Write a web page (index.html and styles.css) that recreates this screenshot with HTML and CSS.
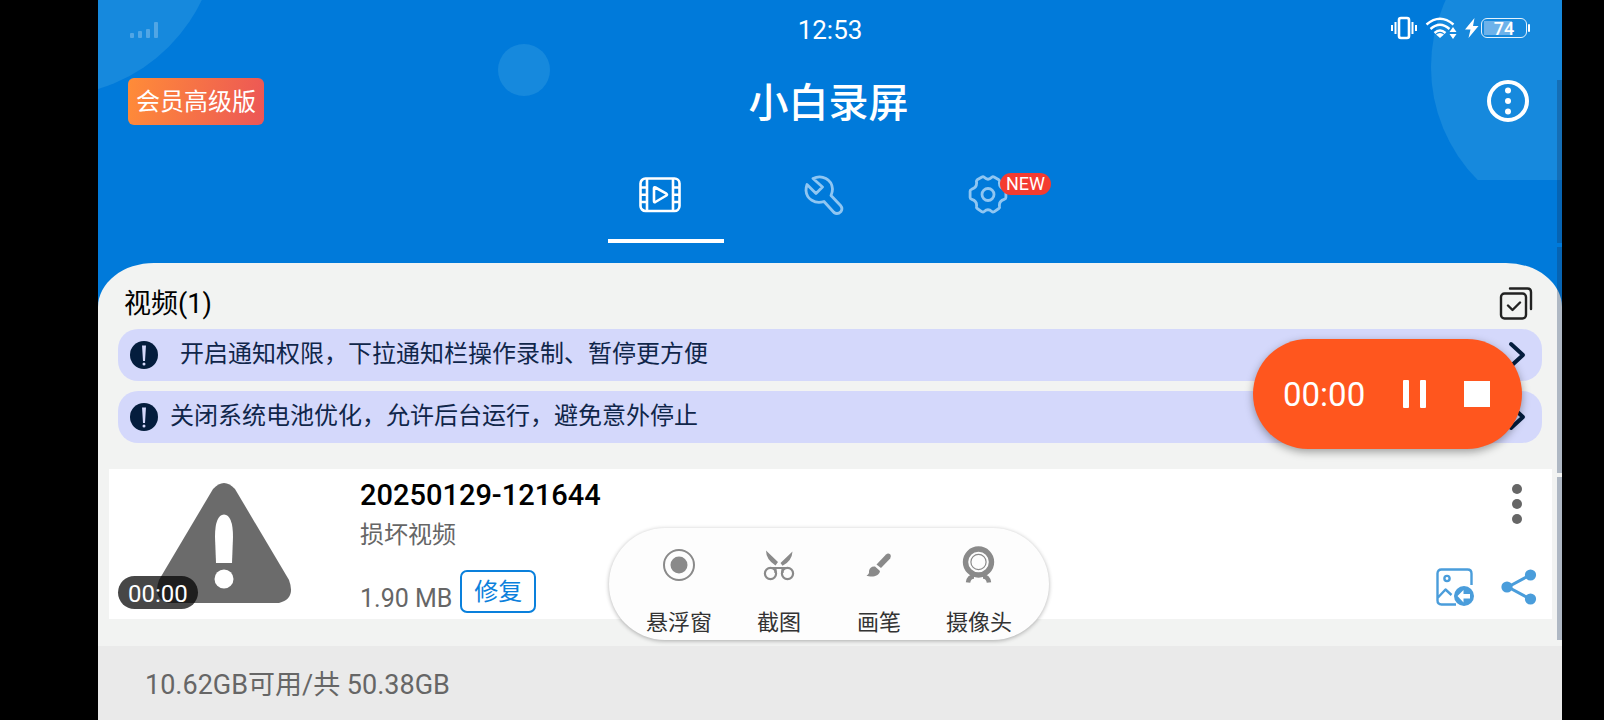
FILE: index.html
```html
<!DOCTYPE html>
<html lang="zh-CN">
<head>
<meta charset="utf-8">
<meta name="viewport" content="width=device-width, initial-scale=1">
<title>小白录屏</title>
<link rel="stylesheet" href="styles.css">
</head>
<body>
<div class="screen">
  <div class="decor" aria-hidden="true">
    <span class="bubble bubble-left"></span>
    <span class="bubble bubble-mid"></span>
    <span class="bubble bubble-right"></span>
  </div>

  <header class="header">
    <div class="status">
      <svg class="signal" width="28" height="18" viewBox="0 0 28 18" fill="#fff"><rect y="12" width="4" height="5" rx="1"/><rect x="8" y="10" width="4" height="7" rx="1"/><rect x="16" y="8" width="4" height="9" rx="1"/><rect x="24" y="1" width="4" height="16" rx="1"/></svg>
      <time class="clock">12:53</time>
      <div class="status-icons">
        <svg width="26" height="24" viewBox="0 0 26 24" fill="none" stroke="#fff" stroke-width="2"><rect x="8" y="2" width="10" height="20" rx="2" stroke-width="2.6"/><path d="M4.500 6v12M1 9v6M21.500 6v12M25 9v6"/></svg>
        <svg width="32" height="24" viewBox="0 0 32 24" fill="none" stroke="#fff" stroke-width="2.400"><path d="M1.500 8.500Q15 -3 28.500 8.500M5.500 13Q15 4.500 24.500 13M9.500 17Q15 12 20.500 17"/><path d="M11 18.500Q15 15.500 19 18.500L15 22z" fill="#fff" stroke="none"/><path d="M28 11l3.500 5h-7zM28 23l3.500-5h-7z" fill="#fff" stroke="none"/></svg>
        <svg width="14" height="20" viewBox="0 0 14 20" fill="#fff"><path d="M9.500 0L0 11.500h5.500L3.500 20 13.500 8H8z"/></svg>
        <span class="battery">74</span>
      </div>
    </div>

    <div class="titlebar">
      <button class="vip" type="button">会员高级版</button>
      <h1 class="title">小白录屏</h1>
      <button class="icon-btn menu" type="button" aria-label="菜单">
        <svg width="42" height="42" viewBox="0 0 42 42"><circle cx="21" cy="21" r="19" fill="none" stroke="#fff" stroke-width="4"/><g fill="#fff"><circle cx="21" cy="10.500" r="3"/><circle cx="21" cy="21" r="3"/><circle cx="21" cy="31.500" r="3"/></g></svg>
      </button>
    </div>

    <nav class="tabs">
      <button class="tab tab-active" type="button" aria-label="视频">
        <svg width="42" height="36" viewBox="0 0 42 36" fill="none" stroke="#fff" stroke-width="2.600" stroke-linejoin="round"><rect x="1.500" y="1.500" width="39" height="32.500" rx="5"/><path d="M8 2v32M34 2v32M2 10.500h6M2 17.800h6M2 25h6M34 10.500h6M34 17.800h6M34 25h6"/><path d="M15 11.300q0-1.500 1.400-.8l11 6.200q1.200.9 0 1.800l-11 6.500q-1.400.6-1.400-.8z"/></svg>
      </button>
      <button class="tab" type="button" aria-label="工具">
        <svg width="40" height="40" viewBox="0 0 40 40" fill="none" stroke="#8fc6f2" stroke-width="2.800" stroke-linejoin="round"><path d="M9 3.500C18-1 28 4.500 28.500 14q0 3-1.500 6.500L36.500 30.500q2.500 3 .5 6-3.500 3.500-7 1L20 26.500C11 29.500 2.500 24 2 15.500q0-3.500 1-6L12 18.500 18.500 12z"/></svg>
      </button>
      <button class="tab" type="button" aria-label="设置">
        <span class="gear">
          <svg width="40" height="40" viewBox="0 0 40 40" fill="none" stroke="#8fc6f2" stroke-width="2.800" stroke-linejoin="round"><path d="M14 2q1.200-.6 2.200.3Q20 6 23.800 2.300q1-.9 2.200-.3l4.800 2.800q1 .8.700 2-.8 5.600 4.700 7.400 1.700.6 1.700 1.800v6.500q0 1.300-1.700 1.800-5.500 1.700-4.700 7 .4 1.400-.7 2.200L26 36.800q-1.200.6-2.200-.3-3.800-3.400-7.600 0-1 .9-2.200.3l-4.800-3.300q-1-.8-.7-2.200.8-5.300-4.700-7-1.700-.5-1.700-1.800V16q0-1.200 1.700-1.800 5.500-1.800 4.700-7.400-.3-1.200.7-2z"/><circle cx="20" cy="19.500" r="6"/></svg>
          <span class="new">NEW</span>
        </span>
      </button>
    </nav>
  </header>

  <main class="sheet">
    <div class="section-head">
      <h2 class="section-title">视频(1)</h2>
      <button class="icon-btn" type="button" aria-label="多选">
        <svg width="34" height="34" viewBox="0 0 34 34" fill="none" stroke="#222" stroke-width="2.400" stroke-linecap="round" stroke-linejoin="round"><rect x="2" y="7.500" width="25" height="25" rx="3.500"/><path d="M11 2.500h17.500q3.500 0 3.500 3.500v17M9 19.500l4.500 4.500 7.500-7.500"/></svg>
      </button>
    </div>

    <div class="notices">
      <a class="notice notice-indent" href="#">
        <svg width="28" height="28" viewBox="0 0 28 28"><circle cx="14" cy="14" r="14" fill="#041d3d"/><path d="M12 4.500h4L15 20h-2z" fill="#d4d8fb"/><circle cx="14" cy="23" r="1.500" fill="#d4d8fb"/></svg>
        <span class="notice-text">开启通知权限，下拉通知栏操作录制、暂停更方便</span>
        <svg class="chevron" width="18" height="28" viewBox="0 0 18 28" fill="none" stroke="#041d3d" stroke-width="4" stroke-linecap="round" stroke-linejoin="round"><path d="M3 3l12 11L3 25"/></svg>
      </a>
      <a class="notice" href="#">
        <svg width="28" height="28" viewBox="0 0 28 28"><circle cx="14" cy="14" r="14" fill="#041d3d"/><path d="M12 4.500h4L15 20h-2z" fill="#d4d8fb"/><circle cx="14" cy="23" r="1.500" fill="#d4d8fb"/></svg>
        <span class="notice-text">关闭系统电池优化，允许后台运行，避免意外停止</span>
        <svg class="chevron" width="18" height="28" viewBox="0 0 18 28" fill="none" stroke="#041d3d" stroke-width="4" stroke-linecap="round" stroke-linejoin="round"><path d="M3 3l12 11L3 25"/></svg>
      </a>
    </div>

    <article class="video">
      <div class="thumb">
        <svg width="136" height="120" viewBox="0 0 136 120"><path d="M57 6q11-12 22 0L133 97q7 19-10 23H13Q-4 116 3 97z" fill="#6b6b6b"/><path d="M60 80L59 54q0-22 9-22.500 9 .5 9 22.500l-1 26z" fill="#fff"/><circle cx="68" cy="96" r="9.500" fill="#fff"/></svg>
        <span class="duration">00:00</span>
      </div>
      <div class="info">
        <h3 class="name">20250129-121644</h3>
        <p class="sub">损坏视频</p>
        <div class="size-row">
          <span class="size">1.90 MB</span>
          <button class="fix" type="button">修复</button>
        </div>
      </div>
      <div class="actions">
        <button class="icon-btn more" type="button" aria-label="更多">
          <svg width="10" height="40" viewBox="0 0 10 40" fill="#666"><circle cx="5" cy="5" r="5"/><circle cx="5" cy="20" r="5"/><circle cx="5" cy="35" r="5"/></svg>
        </button>
        <div class="action-row">
          <button class="icon-btn" type="button" aria-label="转换图片">
            <svg width="38" height="38" viewBox="0 0 38 38" fill="none" stroke="#4a9ddb" stroke-width="2.400"><path d="M20 36.500H5.500q-4 0-4-4v-27q0-4 4-4h26q4 0 4 4V17M2 29.500l7.500-8 6 5.500" stroke-linejoin="round"/><circle cx="11" cy="10.500" r="2.600"/><circle cx="28" cy="28" r="10" fill="#4a9ddb" stroke="none"/><path d="M21.500 28l6-6v4h6.500v4.500h-6.500v4z" fill="#fff" stroke="none"/></svg>
          </button>
          <button class="icon-btn" type="button" aria-label="分享">
            <svg width="36" height="38" viewBox="0 0 36 38" fill="#4a9ddb"><path d="M29 7L7 19l22 12" fill="none" stroke="#4a9ddb" stroke-width="3"/><circle cx="6" cy="19" r="5.600"/><circle cx="29.500" cy="7" r="5.600"/><circle cx="29.500" cy="31" r="5.600"/></svg>
          </button>
        </div>
      </div>
    </article>
  </main>

  <footer class="storage">10.62GB可用/共 50.38GB</footer>

  <div class="tools">
    <button class="tool" type="button">
      <svg width="40" height="40" viewBox="0 0 40 40"><circle cx="20" cy="20" r="15" fill="none" stroke="#8a8a8a" stroke-width="2"/><circle cx="20" cy="20" r="8.500" fill="#8a8a8a"/></svg>
      <span>悬浮窗</span>
    </button>
    <button class="tool" type="button">
      <svg width="40" height="40" viewBox="0 0 40 40"><path d="M7 5.500L19 17l-2.500 3.500Q7 14.500 7 5.500zM33.500 6.500L21.500 18l2 2.800Q33 16 33.500 6.500z" fill="#8a8a8a"/><g fill="none" stroke="#8a8a8a" stroke-width="2.200"><circle cx="11.500" cy="28.500" r="5.600"/><circle cx="28.500" cy="28.500" r="5.600"/><path d="M13 23h14M16.500 28v-6M23.500 28v-6"/></g></svg>
      <span>截图</span>
    </button>
    <button class="tool" type="button">
      <svg width="40" height="40" viewBox="0 0 40 40" fill="#8a8a8a"><path d="M17.500 19.500L27 9.500q2-2 4.200-.3 1.600 2 0 4.300L22 23z"/><path d="M16 21.500l5 4.500c-1 6.500-10 6-13.500 4.500q3-1.500 2.500-4.500 1-5 6-4.500z"/></svg>
      <span>画笔</span>
    </button>
    <button class="tool" type="button">
      <svg width="40" height="40" viewBox="0 0 40 40"><circle cx="19.500" cy="17" r="13" fill="none" stroke="#8a8a8a" stroke-width="5.400"/><circle cx="19.500" cy="17" r="7.600" fill="none" stroke="#8a8a8a" stroke-width="1.200"/><path d="M15 31.500q-5 0-6 6M24 31.500q5 0 6 6" fill="none" stroke="#8a8a8a" stroke-width="4.500"/></svg>
      <span>摄像头</span>
    </button>
  </div>

  <div class="recorder">
    <span class="rec-time">00:00</span>
    <button class="icon-btn" type="button" aria-label="暂停">
      <svg width="24" height="28" viewBox="0 0 24 28" fill="#fff"><rect width="6" height="28" rx="1"/><rect x="17" width="6" height="28" rx="1"/></svg>
    </button>
    <button class="icon-btn" type="button" aria-label="停止">
      <svg width="26" height="28" viewBox="0 0 26 28" fill="#fff"><rect y="1" width="26" height="26"/></svg>
    </button>
  </div>

  <span class="edge edge-top" aria-hidden="true"></span>
  <span class="edge edge-mid" aria-hidden="true"></span>
  <span class="edge edge-low" aria-hidden="true"></span>
</div>
</body>
</html>
```

FILE: styles.css
```css
* { box-sizing: border-box; }

body {
  margin: 0;
  background: #000;
  font-family: Roboto, "Noto Sans CJK SC", sans-serif;
}

h1, h2, h3, p { margin: 0; font-weight: 400; }

button {
  border: 0;
  padding: 0;
  background: none;
  color: inherit;
  font-family: inherit;
  cursor: pointer;
}

svg { display: block; flex: none; }

.icon-btn { display: flex; }

.screen {
  position: relative;
  display: flex;
  flex-direction: column;
  min-height: 100vh;
  margin: 0 42px 0 98px;
  background: #007ada;
  overflow: hidden;
}

/* Header background bubbles */
.decor {
  position: absolute;
  inset: 0 0 auto 0;
  height: 180px;
  overflow: hidden;
}
.bubble {
  position: absolute;
  border-radius: 50%;
  background: #1689dd;
}
.bubble-left { left: -216px; top: -240px; width: 336px; height: 336px; }
.bubble-mid { left: 400px; top: 44px; width: 52px; height: 52px; }
.bubble-right { right: -189px; top: -93px; width: 320px; height: 320px; }

.header { position: relative; color: #fff; }

.status {
  display: grid;
  grid-template-columns: 1fr auto 1fr;
  align-items: center;
  height: 56px;
  padding: 0 32px;
}
.signal { opacity: .25; margin-top: 4px; }
.clock { font-size: 26px; line-height: 32px; padding-top: 4px; }
.status-icons {
  display: flex;
  justify-content: flex-end;
  align-items: center;
  gap: 8px;
}
.battery {
  position: relative;
  width: 46px;
  height: 20px;
  margin: 0 3px 0 -6px;
  border: 1px solid #e4f2fc;
  border-radius: 6px;
  background: linear-gradient(90deg, #6db2ea 70%, transparent 70%) 2px 2px / 40px 14px no-repeat;
  font-size: 18px;
  font-weight: 500;
  line-height: 19px;
  text-align: center;
}
.battery::after {
  content: "";
  position: absolute;
  right: -4px;
  top: 5px;
  width: 2px;
  height: 8px;
  border-radius: 1px;
  background: #fff;
}

.titlebar {
  display: grid;
  grid-template-columns: 1fr auto 1fr;
  align-items: center;
  height: 90px;
  padding: 0 33px 0 30px;
}
.vip {
  justify-self: start;
  height: 47px;
  padding: 2px 8px 0;
  border-radius: 6px;
  background: linear-gradient(100deg, #ff8c38, #ec5656);
  font-size: 24px;
  line-height: 45px;
}
.title { padding-top: 6px; font-size: 40px; font-weight: 500; line-height: 56px; }
.menu { justify-self: end; }

.tabs {
  display: flex;
  justify-content: center;
  height: 117px;
}
.tab {
  position: relative;
  display: flex;
  justify-content: center;
  align-items: center;
  width: 164px;
  height: 97px;
  padding-right: 12px;
}
.tab-active::after {
  content: "";
  position: absolute;
  left: 24px;
  right: 24px;
  bottom: 0;
  height: 4px;
  background: #fff;
}
.gear { position: relative; }
.new {
  position: absolute;
  left: 32px;
  top: -2px;
  height: 22px;
  padding: 0 6px;
  border-radius: 11px;
  background: #f43b30;
  font-size: 18px;
  line-height: 22px;
}

.sheet {
  position: relative;
  flex: 1;
  padding: 20px 10px 27px 11px;
  border-radius: 56px 56px 0 0 / 44px 44px 0 0;
  background: #f2f3f2;
}
.section-head {
  display: flex;
  justify-content: space-between;
  align-items: center;
  height: 40px;
  padding: 0 19px 0 15px;
}
.section-title { padding-top: 2px; font-size: 27px; line-height: 40px; }

.notices {
  display: grid;
  gap: 10px;
  margin: 6px 10px 0 9px;
}
.notice {
  display: flex;
  align-items: center;
  gap: 12px;
  height: 52px;
  padding: 0 16px 0 12px;
  border-radius: 20px;
  background: #d4d8fb;
  color: #10264a;
  font-size: 24px;
  text-decoration: none;
}
.notice-indent { gap: 22px; }
.notice-text { line-height: 32px; padding-bottom: 2px; }
.chevron { margin-left: auto; }

.video {
  display: flex;
  height: 150px;
  margin-top: 26px;
  background: #fff;
}
.thumb {
  position: relative;
  width: 251px;
  padding: 14px 0 0 47px;
}
.duration {
  position: absolute;
  left: 9px;
  bottom: 10px;
  height: 33px;
  padding: 0 10px;
  border-radius: 17px;
  background: rgba(0, 0, 0, .72);
  color: #fff;
  font-size: 24px;
  line-height: 36px;
}
.info { flex: 1; padding-top: 8px; color: #666; }
.name { color: #000; font-size: 29px; font-weight: 500; line-height: 36px; }
.sub { padding-top: 2px; font-size: 24px; line-height: 40px; }
.size-row { display: flex; align-items: center; gap: 8px; margin-top: 12px; }
.size { font-size: 25px; line-height: 32px; padding-top: 16px; }
.fix {
  height: 43px;
  padding: 2px 12px 0;
  border: 2px solid #0a80dc;
  border-radius: 7px;
  color: #0a80dc;
  font-size: 24px;
  line-height: 37px;
}
.actions {
  display: flex;
  flex-direction: column;
  justify-content: space-between;
  align-items: flex-end;
  padding: 15px 15px 13px 0;
}
.more { padding-right: 15px; }
.action-row { display: flex; gap: 27px; }

.storage {
  position: relative;
  height: 74px;
  padding: 0 47px;
  background: #eaeaea;
  color: #666;
  font-size: 27px;
  line-height: 78px;
}

/* Floating overlays */
.tools {
  position: absolute;
  left: 50%;
  bottom: 80px;
  display: grid;
  grid-template-columns: repeat(4, 100px);
  justify-content: center;
  width: 440px;
  height: 112px;
  margin-left: -221px;
  border-radius: 56px;
  background: #fdfdfd;
  box-shadow: 0 1px 4px rgba(0, 0, 0, .3);
}
.tool {
  display: flex;
  flex-direction: column;
  align-items: center;
  justify-content: space-between;
  padding: 17px 0 1px;
  color: #333;
  font-size: 22px;
  line-height: 32px;
}
.recorder {
  position: absolute;
  right: 40px;
  top: 339px;
  display: flex;
  align-items: center;
  justify-content: space-between;
  width: 269px;
  height: 110px;
  padding: 0 32px 0 30px;
  border-radius: 55px;
  background: #ff561e;
  box-shadow: 0 3px 8px rgba(0, 0, 0, .35);
  color: #fff;
}
.rec-time { padding-top: 2px; font-size: 33px; line-height: 40px; }

/* Side scroll markers */
.edge {
  position: absolute;
  right: 0;
  width: 5px;
  background: rgba(20, 50, 90, .3);
}
.edge-top { top: 80px; height: 163px; }
.edge-mid { top: 247px; height: 226px; }
.edge-low { top: 477px; height: 163px; }
```
